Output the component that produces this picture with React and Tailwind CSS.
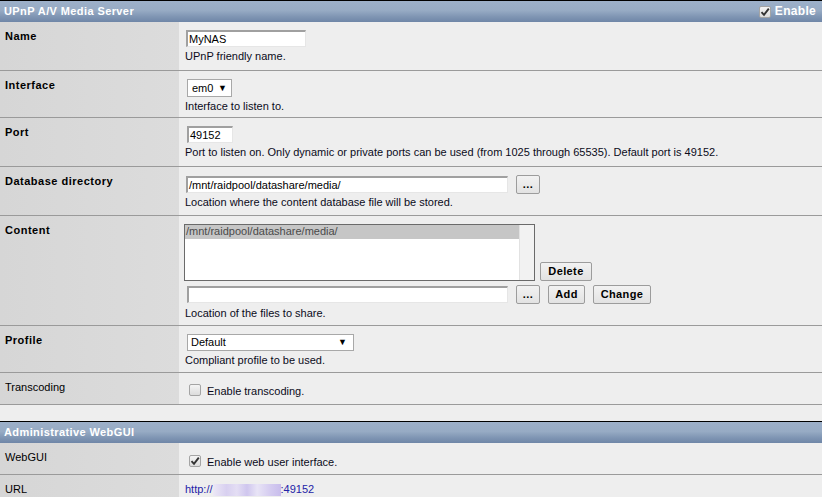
import React from "react";

const font = { fontFamily: '"Liberation Sans", Arial, sans-serif' };

function Header({ title, right }) {
  return (
    <div className="h-[22px] border-t border-black bg-[linear-gradient(to_bottom,#9db0c9_0%,#97abc4_45%,#7f95b3_75%,#6f86a7_100%)] flex items-center justify-between pl-[4px] pr-[6px]">
      <span className="text-white font-bold text-[11px] leading-[13px] tracking-[0.4px]">{title}</span>
      {right}
    </div>
  );
}

function CheckBox({ checked }) {
  return (
    <span className="inline-flex w-[12px] h-[12px] rounded-[2px] border border-[#a4a4a4] bg-[linear-gradient(to_bottom,#f4f4f4,#dcdcdc)] items-center justify-center shrink-0">
      {checked && (
        <svg width="10" height="10" viewBox="0 0 10 10">
          <path d="M1.5 5.2 L4 7.8 L8.8 1.6" fill="none" stroke="#333" strokeWidth="1.9" />
        </svg>
      )}
    </span>
  );
}

function Row({ label, bold = true, h, children, last }) {
  return (
    <div className={`grid grid-cols-[179px_1fr] ${last ? "" : "border-b border-[#9a9a9a]"}`} style={{ height: h }}>
      <div className={`bg-[linear-gradient(to_right,#d6d6d6,#dcdcdc)] pl-[5px] pt-[8px] text-[11px] leading-[13px] text-black ${bold ? "font-bold tracking-[0.5px]" : ""}`}>
        {label}
      </div>
      <div className="bg-[#eeeeee] pl-[6px] pt-[8px] text-[11px] leading-[13px]">{children}</div>
    </div>
  );
}

function TextInput({ w, value }) {
  return (
    <div
      className="h-[17px] bg-white border-t-2 border-l-2 border-t-[#a0a0a0] border-l-[#a0a0a0] border-r border-b border-r-[#e6e6e6] border-b-[#e6e6e6] text-[11px] leading-[14px] pl-[1px] text-black"
      style={{ width: w }}
    >
      {value}
    </div>
  );
}

function Btn({ children, w }) {
  return (
    <div
      className="h-[19px] border border-[#9c9c9c] rounded-[2px] bg-[linear-gradient(to_bottom,#f2f2f2,#e2e2e2)] flex items-center justify-center text-[11px] font-bold tracking-[0.4px] text-black leading-[13px]"
      style={{ width: w }}
    >
      {children}
    </div>
  );
}

function Help({ children, mt = "mt-[3px]" }) {
  return <div className={`${mt} text-[11px] leading-[13px] text-[#0b0b1a]`}>{children}</div>;
}

export default function App() {
  return (
    <div className="w-[822px] h-[497px] overflow-hidden bg-[#eeeeee] text-[11px] leading-[13px]" style={font}>
      <Header
        title="UPnP A/V Media Server"
        right={
          <span className="flex items-center gap-[4px]">
            <CheckBox checked />
            <span className="text-white font-bold text-[12px] leading-[13px] tracking-[0.3px]">Enable</span>
          </span>
        }
      />
      <Row label="Name" h={49}>
        <div className="ml-[1px]">
          <TextInput w={120} value="MyNAS" />
        </div>
        <Help mt="mt-[3px]">UPnP friendly name.</Help>
      </Row>
      <Row label="Interface" h={47}>
        <div className="ml-[2px] w-[45px] h-[18px] bg-white border border-[#a8a8a8] flex items-center justify-between px-[4px] text-[11px] text-black">
          <span>em0</span>
          <span className="text-[9px]">▼</span>
        </div>
        <Help mt="mt-[3px]">Interface to listen to.</Help>
      </Row>
      <Row label="Port" h={49}>
        <div className="ml-[2px]">
          <TextInput w={46} value="49152" />
        </div>
        <Help mt="mt-[3px]">Port to listen on. Only dynamic or private ports can be used (from 1025 through 65535). Default port is 49152.</Help>
      </Row>
      <Row label="Database directory" h={49}>
        <div className="flex items-start gap-[8px] ml-[1px] pt-[1px]">
          <TextInput w={322} value="/mnt/raidpool/datashare/media/" />
          <div className="-mt-[1px]">
            <Btn w={24}>...</Btn>
          </div>
        </div>
        <Help mt="mt-[2px]">Location where the content database file will be stored.</Help>
      </Row>
      <Row label="Content" h={110}>
        <div className="flex items-end gap-[5px] -ml-[1px]">
          <div className="w-[351px] h-[57px] border border-[#6a6a6a] bg-white flex">
            <div className="flex-1">
              <div className="h-[14px] bg-[#c6c6c6] text-[11px] leading-[13px] text-[#4a4a4a] pl-[1px]">/mnt/raidpool/datashare/media/</div>
            </div>
            <div className="w-[15px] bg-[#f2f2f2] border-l border-[#e2e2e2]" />
          </div>
          <Btn w={52}>Delete</Btn>
        </div>
        <div className="flex items-center gap-[8px] mt-[4px] ml-[2px]">
          <TextInput w={321} value="" />
          <Btn w={24}>...</Btn>
          <Btn w={37}>Add</Btn>
          <Btn w={58}>Change</Btn>
        </div>
        <Help mt="mt-[3px]">Location of the files to share.</Help>
      </Row>
      <Row label="Profile" h={47}>
        <div className="ml-[2px] w-[167px] h-[17px] bg-white border border-[#a8a8a8] flex items-center justify-between pl-[3px] pr-[6px] text-[11px] text-black">
          <span>Default</span>
          <span className="text-[9px]">▼</span>
        </div>
        <Help mt="mt-[3px]">Compliant profile to be used.</Help>
      </Row>
      <Row label="Transcoding" bold={false} h={32}>
        <div className="flex items-center gap-[6px] ml-[4px] pt-[1px]">
          <CheckBox />
          <span className="text-[11px] leading-[13px] text-[#0b0b1a] pt-[3px]">Enable transcoding.</span>
        </div>
      </Row>
      <div className="h-[16px]" />
      <Header title="Administrative WebGUI" />
      <Row label="WebGUI" bold={false} h={32}>
        <div className="flex items-center gap-[6px] ml-[4px] pt-[2px]">
          <CheckBox checked />
          <span className="text-[11px] leading-[13px] text-[#0b0b1a] pt-[3px]">Enable web user interface.</span>
        </div>
      </Row>
      <Row label="URL" bold={false} h={40} last>
        <div className="text-[11px] leading-[13px] text-[#2323a8] flex items-center">
          <span>http://</span>
          <span className="inline-block w-[68px] h-[12px] bg-[linear-gradient(to_right,#ece8f6_0%,#d8d0f0_20%,#e4def4_35%,#cfc6ee_50%,#e8e4f6_65%,#d4cbf0_85%,#c8bdec_100%)]" />
          <span>:49152</span>
        </div>
      </Row>
    </div>
  );
}
